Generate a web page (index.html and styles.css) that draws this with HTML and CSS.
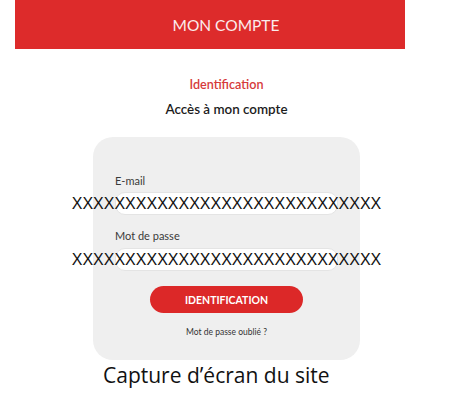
FILE: index.html
```html
<!DOCTYPE html>
<html lang="fr">
<head>
<meta charset="utf-8">
<title>Mon compte</title>
<link rel="stylesheet" href="styles.css">
</head>
<body>
<header class="topbar">MON COMPTE</header>
<main class="main">
  <div class="titles">
    <div class="kicker">Identification</div>
    <h1 class="heading">Accès à mon compte</h1>
  </div>
  <form class="card">
    <label class="label">E-mail</label>
    <div class="field">
      <div class="input"></div>
      <span class="mask">XXXXXXXXXXXXXXXXXXXXXXXXXXXXX</span>
    </div>
    <label class="label label-2">Mot de passe</label>
    <div class="field">
      <div class="input"></div>
      <span class="mask">XXXXXXXXXXXXXXXXXXXXXXXXXXXXX</span>
    </div>
    <button type="button" class="btn">IDENTIFICATION</button>
    <a class="forgot">Mot de passe oublié ?</a>
  </form>
</main>
<p class="caption">Capture d’écran du site</p>
</body>
</html>
```
FILE: styles.css
```css
html, body { margin: 0; padding: 0; background: #fff; }
body { width: 450px; height: 400px; overflow: hidden; font-family: "Lato", "Open Sans", sans-serif; }

.topbar {
  margin-left: 15px;
  width: 390px;
  height: 49px;
  background: #dd2b2b;
  color: #fbecec;
  display: flex;
  align-items: center;
  justify-content: center;
  font-family: "Lato", sans-serif;
  font-size: 15.5px;
  padding: 1px 0 0 32px;
  box-sizing: border-box;
}

.main { margin-left: 93px; width: 267px; }

.titles {
  display: flex;
  flex-direction: column;
  align-items: center;
  padding-top: 28px;
  height: 88px;
  box-sizing: border-box;
}
.kicker { color: #d63a3a; font-size: 12.6px; font-weight: 600; line-height: 16px; font-family: "Lato", sans-serif; }
.heading { margin: 8px 0 0; color: #1c1c1c; font-size: 13.4px; font-weight: 600; line-height: 16px; font-family: "Lato", sans-serif; }

.card {
  background: #efefef;
  border-radius: 20px;
  height: 223px;
  box-sizing: border-box;
  padding: 37px 22px 0;
  display: flex;
  flex-direction: column;
  margin: 0;
}
.label { font-size: 11px; line-height: 14px; color: #3a3a3a; margin-bottom: 4px; font-family: "Lato", sans-serif; }
.label-2 { margin-top: 14px; margin-bottom: 5px; }

.field { position: relative; height: 23px; }
.input {
  height: 23px;
  background: #fff;
  border: 1px solid #e4e4e4;
  border-radius: 10px;
  box-sizing: border-box;
}
.mask {
  position: absolute;
  left: 50%;
  top: 50%;
  transform: translate(-50%, -50%);
  font-family: "Liberation Sans", Arial, sans-serif;
  font-size: 16px;
  line-height: 16px;
  color: #111;
  white-space: nowrap;
}

.btn {
  align-self: center;
  margin-top: 15px;
  width: 153px;
  height: 27px;
  border: 0;
  border-radius: 14px;
  background: #dc2828;
  color: #fff;
  font-family: "Lato", sans-serif;
  font-weight: 700;
  font-size: 10.5px;
  padding: 0;
}
.forgot {
  align-self: center;
  margin-top: 14px;
  font-size: 8.5px;
  line-height: 10px;
  color: #333;
  font-family: "Lato", sans-serif;
}

.caption {
  margin: 3px 0 0 103px;
  font-family: "Open Sans", sans-serif;
  font-size: 21px;
  line-height: 24px;
  color: #111;
}
```
